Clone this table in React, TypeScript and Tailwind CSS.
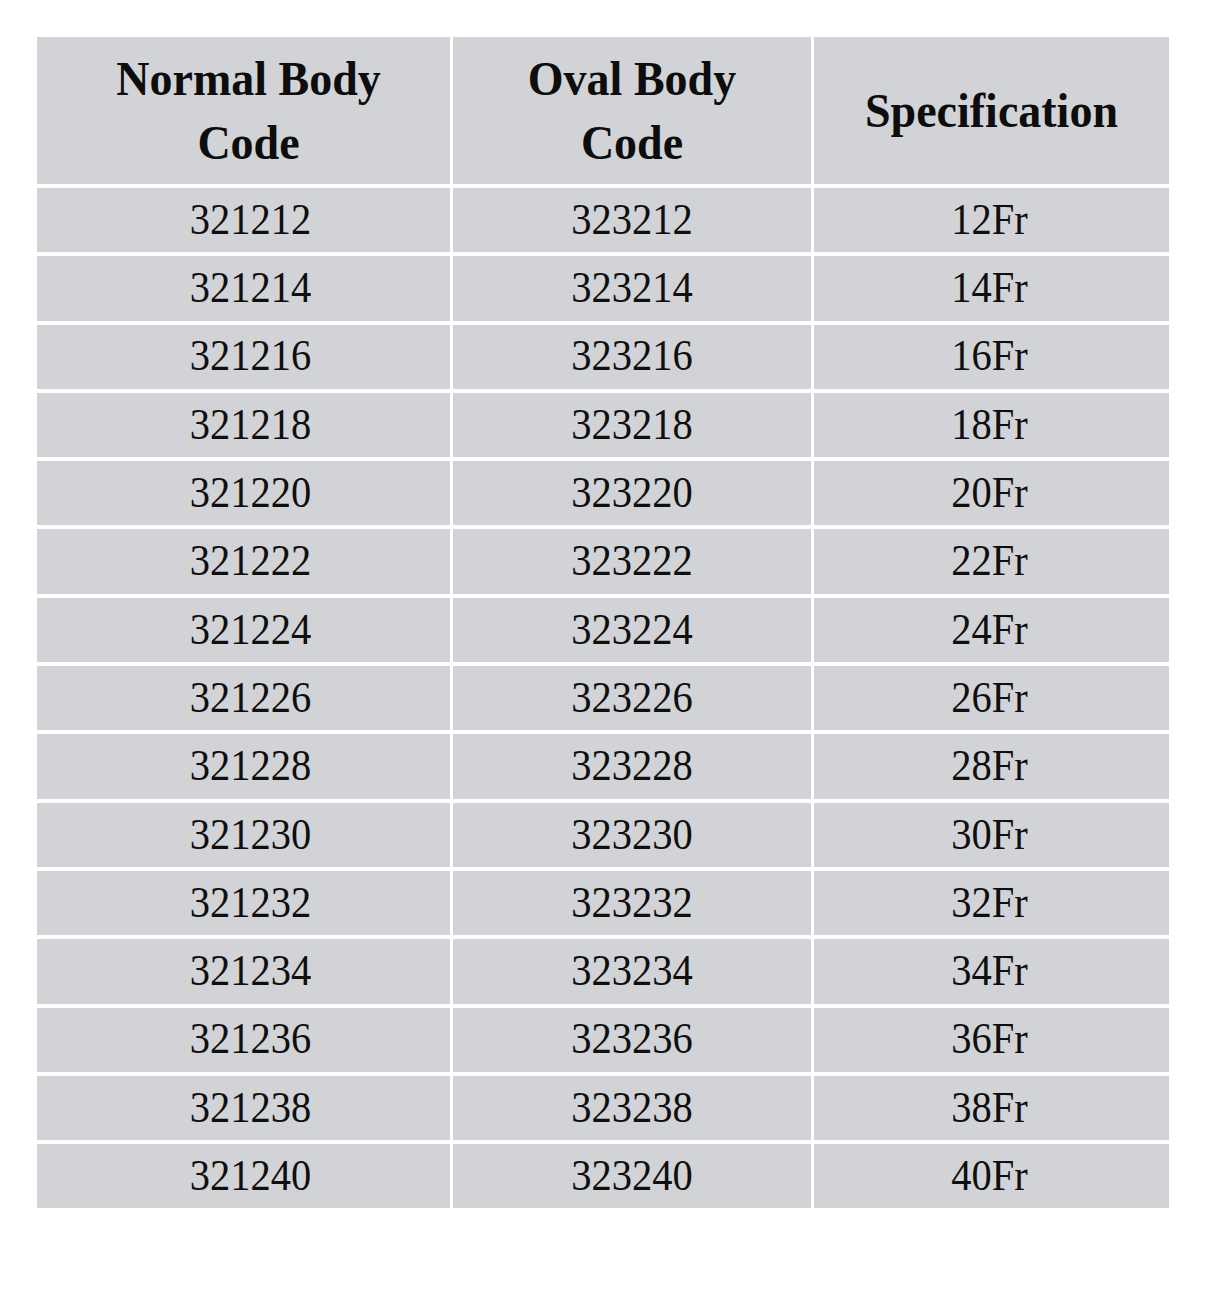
const rows = [
  ["321212", "323212", "12Fr"],
  ["321214", "323214", "14Fr"],
  ["321216", "323216", "16Fr"],
  ["321218", "323218", "18Fr"],
  ["321220", "323220", "20Fr"],
  ["321222", "323222", "22Fr"],
  ["321224", "323224", "24Fr"],
  ["321226", "323226", "26Fr"],
  ["321228", "323228", "28Fr"],
  ["321230", "323230", "30Fr"],
  ["321232", "323232", "32Fr"],
  ["321234", "323234", "34Fr"],
  ["321236", "323236", "36Fr"],
  ["321238", "323238", "38Fr"],
  ["321240", "323240", "40Fr"],
];

function HeaderCell({ lines, first }: { lines: string[]; first?: boolean }) {
  return (
    <div
      className={`bg-[#d2d3d6] flex flex-col items-center justify-center ${first ? "pl-[10px]" : ""}`}
    >
      {lines.map((line) => (
        <span
          key={line}
          className="inline-block scale-y-[1.07] text-[46px] leading-[64px] font-bold text-[#0d0d0d]"
        >
          {line}
        </span>
      ))}
    </div>
  );
}

export default function App() {
  return (
    <div
      className="min-h-[1303px] w-[1207px] bg-white pt-[37px] pl-[37px]"
      style={{ fontFamily: '"Liberation Serif", "Times New Roman", serif' }}
    >
      <div className="grid grid-cols-[413px_358px_355px] grid-rows-[147px] auto-rows-[64.3px] gap-x-[3px] gap-y-[4px] w-fit">
        <HeaderCell lines={["Normal Body", "Code"]} first />
        <HeaderCell lines={["Oval Body", "Code"]} />
        <HeaderCell lines={["Specification"]} />

        {rows.map((row) =>
          row.map((cell, i) => (
            <div
              key={`${row[0]}-${i}`}
              className={`bg-[#d2d3d6] flex items-center justify-center ${i === 0 ? "pl-[14px]" : ""} ${i === 2 ? "pr-[4px]" : ""}`}
            >
              <span className="inline-block scale-y-[1.07] text-[40.5px] leading-none text-[#0f0f0f]">
                {cell}
              </span>
            </div>
          ))
        )}
      </div>
    </div>
  );
}
